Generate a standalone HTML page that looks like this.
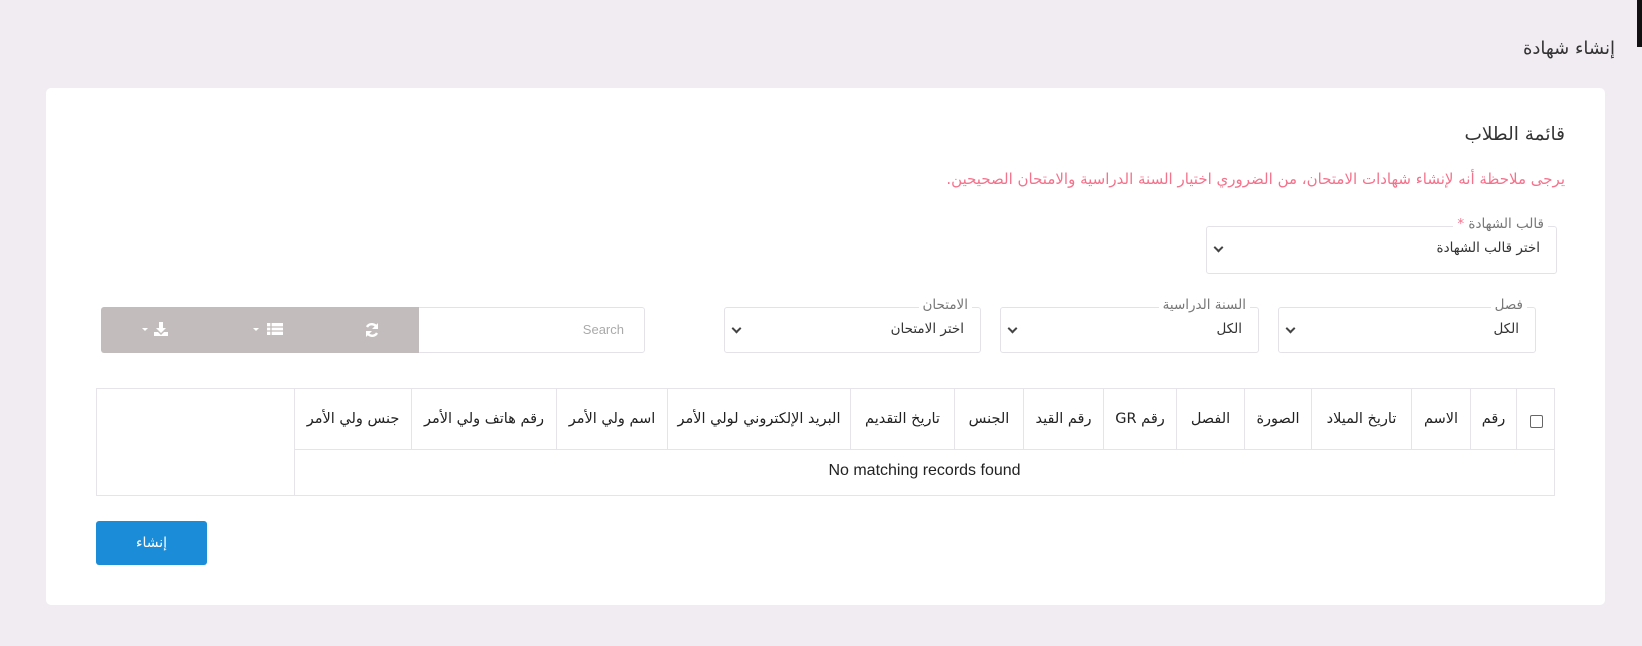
<!DOCTYPE html>
<html><head><meta charset="utf-8"><style>
*{box-sizing:border-box;margin:0;padding:0}
body{width:1642px;height:646px;background:#f0ecf2;position:relative;overflow:hidden;font-family:"DejaVu Sans","Liberation Sans",sans-serif;color:#222}
.a{position:absolute}
.r{direction:rtl;white-space:nowrap}
.card{left:46px;top:88px;width:1559px;height:517px;background:#fff;border-radius:5px}
.sel{border:1px solid #e4e2e8;border-radius:3px;background:#fff}
.lab{position:absolute;top:-11px;background:#fff;padding:0 4px;font-size:13.5px;color:#777;direction:rtl;white-space:nowrap}
.val{position:absolute;right:16px;top:13px;font-size:13.5px;color:#333;direction:rtl;white-space:nowrap}
.chev{position:absolute;left:8px;top:17px;width:7px;height:7px;border-right:2px solid #444;border-bottom:2px solid #444;transform:rotate(45deg)}
.th{position:absolute;top:388px;height:61px;border-left:1px solid #e6e4ea;font-size:14.5px;display:flex;align-items:center;justify-content:center;direction:rtl;white-space:nowrap}
</style></head><body>
<div class="a" style="left:1637px;top:0;width:5px;height:47px;background:#111"></div>
<div class="a r" style="right:27px;top:38px;font-size:18px;color:#333">إنشاء شهادة</div>
<div class="a card"></div>
<div class="a r" style="right:77px;top:124px;font-size:18.5px;color:#333">قائمة الطلاب</div>
<div class="a r" style="right:77px;top:170px;font-size:15px;color:#f4728c">يرجى ملاحظة أنه لإنشاء شهادات الامتحان، من الضروري اختيار السنة الدراسية والامتحان الصحيحين.</div>

<div class="a sel" style="left:1206px;top:226px;width:351px;height:48px"><span class="lab" style="right:8px">قالب الشهادة <span style="color:#f4728c">*</span></span><span class="val">اختر قالب الشهادة</span><span class="chev"></span></div>

<div class="a sel" style="left:1278px;top:307px;width:258px;height:46px"><span class="lab" style="right:8px">فصل</span><span class="val">الكل</span><span class="chev"></span></div>
<div class="a sel" style="left:1000px;top:307px;width:259px;height:46px"><span class="lab" style="right:8px">السنة الدراسية</span><span class="val">الكل</span><span class="chev"></span></div>
<div class="a sel" style="left:724px;top:307px;width:257px;height:46px"><span class="lab" style="right:8px">الامتحان</span><span class="val">اختر الامتحان</span><span class="chev"></span></div>
<div class="a sel" style="left:417px;top:307px;width:228px;height:46px"><span style="position:absolute;right:20px;top:14px;font-size:13px;color:#aaa;font-family:'Liberation Sans',sans-serif">Search</span></div>
<div class="a" style="left:101px;top:307px;width:318px;height:46px;background:#c2bcbc;border-radius:3px 0 0 3px"></div>
<svg class="a" style="left:140px;top:320px" width="36" height="18" viewBox="0 0 36 18"><path d="M2 8h6l-3 3z" fill="#fff"/><path d="M19 2h4v6h3l-5 5-5-5h3z M14 12h4l3 3 3-3h4v4h-14z" fill="#fff"/></svg>
<svg class="a" style="left:251px;top:320px" width="36" height="18" viewBox="0 0 36 18"><path d="M2 8h6l-3 3z" fill="#fff"/><path d="M16 3h16v12h-16z" fill="#fff"/><path d="M16 7h16M16 11h16M20 3v12" stroke="#c2bcbc" stroke-width="1.3"/></svg>
<svg class="a" style="left:364px;top:322px" width="16" height="16" viewBox="0 0 16 16"><path d="M13 6A5.5 5.5 0 0 0 3 5" stroke="#fff" stroke-width="2.4" fill="none"/><path d="M3 10A5.5 5.5 0 0 0 13 11" stroke="#fff" stroke-width="2.4" fill="none"/><path d="M14 1v6h-6z M2 15v-6h6z" fill="#fff"/></svg>

<div class="a" style="left:96px;top:388px;width:1459px;height:108px;border:1px solid #e6e4ea"></div>
<div class="a" style="left:294px;top:449px;width:1261px;height:1px;background:#e6e4ea"></div>
<div class="a" style="left:294px;top:388px;width:1px;height:108px;background:#e6e4ea"></div>
<div class="th" style="left:1516px;width:39px"><span style="width:13px;height:13px;border:1px solid #666;border-radius:2px;margin-top:6px"></span></div>
<div class="th" style="left:1470px;width:46px">رقم</div>
<div class="th" style="left:1411px;width:59px">الاسم</div>
<div class="th" style="left:1311px;width:100px">تاريخ الميلاد</div>
<div class="th" style="left:1244px;width:67px">الصورة</div>
<div class="th" style="left:1176px;width:68px">الفصل</div>
<div class="th" style="left:1103px;width:73px">رقم GR</div>
<div class="th" style="left:1023px;width:80px">رقم القيد</div>
<div class="th" style="left:954px;width:69px">الجنس</div>
<div class="th" style="left:850px;width:104px">تاريخ التقديم</div>
<div class="th" style="left:667px;width:183px">البريد الإلكتروني لولي الأمر</div>
<div class="th" style="left:556px;width:111px">اسم ولي الأمر</div>
<div class="th" style="left:411px;width:145px">رقم هاتف ولي الأمر</div>
<div class="th" style="left:294px;width:117px">جنس ولي الأمر</div>
<div class="a" style="left:294px;top:462px;width:1261px;text-align:center;font-size:16px;font-family:'Liberation Sans',sans-serif">No matching records found</div>

<div class="a" style="left:96px;top:521px;width:111px;height:44px;background:#1a8cd8;border-radius:3px;color:#fff;font-size:14px;display:flex;align-items:center;justify-content:center">إنشاء</div>
</body></html>
